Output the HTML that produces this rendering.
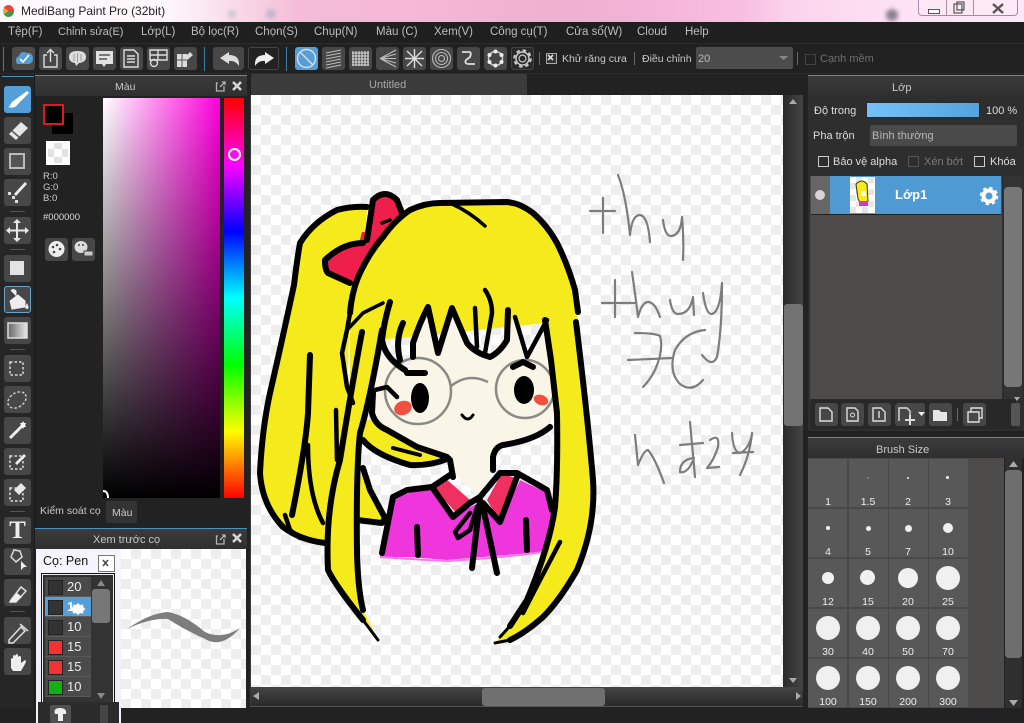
<!DOCTYPE html>
<html><head><meta charset="utf-8"><title>MediBang Paint Pro</title>
<style>
html,body{margin:0;padding:0;background:#222}
#r{position:relative;width:1024px;height:723px;overflow:hidden;background:#222;font-family:"Liberation Sans",sans-serif;font-size:11px;color:#ccc}
#r div,#r span.t{position:absolute}
.t{white-space:nowrap;line-height:14px}
.m{top:25px;font-size:11.5px;color:#bdbdbd}
.b{width:23px;height:23px;background:#474747;border-radius:3px}
.l{left:4px;width:27px;height:27px;background:#474747;border-radius:3px}
.s{left:10px;width:15px;height:1px;background:#555}
.h{background:linear-gradient(#3b3b3b,#2f2f2f);height:20px;border-top:1px solid #4e91bd}
.c{width:39px;height:48px;background:#585858}
.lb{width:40px;text-align:center;color:#eee;font-size:10.5px}
.d{background:#f0f0f0;border-radius:50%}
.ck{background:repeating-conic-gradient(#eeeeee 0 25%,#fff 0 50%) 0 0/20px 20px}
.li{left:45px;width:46px;height:19px;background:#4a4a4a;border-bottom:1px solid #5a5a5a}
.sw{left:3px;top:3px;width:13px;height:13px;border:1px solid #222}
.n{left:22px;top:3px;font-size:13px;color:#eee}
</style></head><body><div id="r">

<!-- title bar -->
<div style="left:0;top:0;width:1024px;height:22px;background:linear-gradient(90deg,#fdfafc 0,#fdf6fa 170px,#f8dbe9 235px,#f4bcd6 300px,#f6b7d6 420px,#eeb0cf 560px,#f3b3d6 640px,#f8bee0 740px,#fbd3ec 790px,#fde2f4 900px,#fce8f6 1024px)"></div>
<div style="left:886px;top:9px;width:12px;height:12px;border-radius:50%;background:#8d7f8c;filter:blur(2px)"></div>
<div style="left:228px;top:10px;width:8px;height:8px;border-radius:50%;background:#cfc4d0;filter:blur(2px)"></div>
<div style="left:266px;top:9px;width:10px;height:10px;border-radius:50%;background:#c9b4cc;filter:blur(2px)"></div>
<div style="left:3px;top:5px;width:11px;height:12px;border-radius:50%;background:conic-gradient(#e8443a 0 30%,#3a9a4a 0 65%,#f2a23a 0 85%,#e8443a 0)"></div>
<span class="t" style="left:21px;top:4px;font-size:12px;color:#222">MediBang Paint Pro (32bit)</span>
<div style="left:918px;top:-2px;width:100px;height:18px;border:1px solid #a08ca0;border-radius:0 0 4px 4px;box-sizing:border-box;background:rgba(255,235,248,.5)"></div>
<div style="left:946px;top:0;width:1px;height:16px;background:#a58fa5"></div>
<div style="left:973px;top:0;width:1px;height:16px;background:#a58fa5"></div>
<div style="left:928px;top:9px;width:10px;height:3px;border:1px solid #555;background:#fff"></div>

<!-- menu -->
<div style="left:0;top:22px;width:1024px;height:21px;background:#1f1f1f"></div>
<span class="t m" style="left:8px">Tệp(F)</span>
<span class="t m" style="left:58px;font-size:11px">Chỉnh sửa(E)</span>
<span class="t m" style="left:141px">Lớp(L)</span>
<span class="t m" style="left:191px">Bộ lọc(R)</span>
<span class="t m" style="left:255px">Chọn(S)</span>
<span class="t m" style="left:314px">Chụp(N)</span>
<span class="t m" style="left:376px">Màu (C)</span>
<span class="t m" style="left:434px">Xem(V)</span>
<span class="t m" style="left:490px">Công cụ(T)</span>
<span class="t m" style="left:566px">Cửa sổ(W)</span>
<span class="t m" style="left:637px">Cloud</span>
<span class="t m" style="left:685px">Help</span>

<!-- toolbar -->
<div style="left:0;top:43px;width:1024px;height:31px;background:#212121;border-top:1px solid #2c2c2c;border-bottom:1px solid #2c2c2c;box-sizing:border-box"></div>
<div style="left:3px;top:47px;width:1px;height:24px;background:#3f7ea8"></div>
<div style="left:204px;top:47px;width:1px;height:24px;background:#3f7ea8"></div>
<div style="left:286px;top:47px;width:1px;height:24px;background:#3f7ea8"></div>
<div class="b" style="left:12px;top:47px;background:#4d4a48"></div>
<div class="b" style="left:39px;top:47px"></div>
<div class="b" style="left:66px;top:47px"></div>
<div class="b" style="left:93px;top:47px"></div>
<div class="b" style="left:120px;top:47px"></div>
<div class="b" style="left:147px;top:47px"></div>
<div class="b" style="left:174px;top:47px"></div>
<div class="b" style="left:213px;top:47px;width:31px"></div>
<div class="b" style="left:248px;top:47px;width:31px;background:#222;box-shadow:inset 0 0 0 1px #444"></div>
<div class="b" style="left:295px;top:47px;background:#559fd8"></div>
<div class="b" style="left:322px;top:47px"></div>
<div class="b" style="left:349px;top:47px"></div>
<div class="b" style="left:376px;top:47px"></div>
<div class="b" style="left:403px;top:47px"></div>
<div class="b" style="left:430px;top:47px"></div>
<div class="b" style="left:457px;top:47px"></div>
<div class="b" style="left:484px;top:47px"></div>
<div class="b" style="left:511px;top:47px;background:#2a2a2a;box-shadow:inset 0 0 0 1px #444"></div>
<div style="left:539px;top:52px;width:1px;height:13px;background:#666"></div>
<div style="left:546px;top:53px;width:9px;height:9px;border:1px solid #aaa;background:#333"></div>
<span class="t" style="left:562px;top:52px;color:#c8c8c8;font-size:10.5px">Khử răng cưa</span>
<div style="left:634px;top:52px;width:1px;height:13px;background:#666"></div>
<span class="t" style="left:642px;top:52px;color:#c8c8c8;font-size:10.5px">Điều chỉnh</span>
<div style="left:696px;top:47px;width:97px;height:22px;background:#4c4c4c;border-radius:2px"></div>
<span class="t" style="left:698px;top:52px;color:#bbb">20</span>
<div style="left:797px;top:52px;width:1px;height:13px;background:#666"></div>
<div style="left:805px;top:54px;width:9px;height:9px;border:1px solid #444"></div>
<span class="t" style="left:820px;top:52px;color:#6f6f6f">Cạnh mềm</span>

<!-- left tools -->
<div style="left:0;top:76px;width:35px;height:632px;background:#262626;border-right:1px solid #1a1a1a;box-sizing:border-box"></div>
<div style="left:2px;top:76px;width:32px;height:1px;background:#4e91bd"></div>
<div class="l" style="top:86px;background:#559fd8"></div>
<div class="l" style="top:117px"></div><div class="l" style="top:148px"></div><div class="l" style="top:179px"></div>
<div class="s" style="top:211px"></div>
<div class="l" style="top:217px"></div>
<div class="s" style="top:249px"></div>
<div class="l" style="top:255px"></div>
<div class="l" style="top:286px;box-shadow:inset 0 0 0 1px #6aa3c8"></div>
<div class="l" style="top:317px"></div>
<div class="s" style="top:349px"></div>
<div class="l" style="top:355px"></div><div class="l" style="top:386px"></div><div class="l" style="top:417px"></div><div class="l" style="top:448px"></div><div class="l" style="top:479px"></div>
<div class="s" style="top:511px"></div>
<div class="l" style="top:517px"></div><div class="l" style="top:548px"></div><div class="l" style="top:579px"></div>
<div class="s" style="top:611px"></div>
<div class="l" style="top:617px"></div><div class="l" style="top:648px"></div>
<span class="t" style="left:6px;top:519px;width:23px;text-align:center;font:bold 25px/24px 'Liberation Serif',serif;color:#eee">T</span>

<!-- colour panel -->
<div style="left:35px;top:75px;width:212px;height:423px;background:#222"></div>
<div class="h" style="left:35px;top:75px;width:212px"></div>
<span class="t" style="left:115px;top:80px;color:#c8c8c8;font-size:10.5px">Màu</span>
<div style="left:52px;top:113px;width:21px;height:21px;background:#000"></div>
<div style="left:43px;top:104px;width:17px;height:17px;background:#000;border:2px solid #e01a1a"></div>
<div style="left:46px;top:141px;width:24px;height:24px;background:#fff"></div>
<svg style="position:absolute;left:46px;top:141px" width="24" height="24" viewBox="0 0 24 24"><path d="M2 8h6v8H2zM16 8h6v8h-6zM8 2h8v6H8zM8 16h8v6H8z" fill="#e2e2e2"/></svg>
<span class="t" style="left:43px;top:171px;font-size:9.5px;line-height:11px;color:#ccc;white-space:pre">R:0
G:0
B:0</span>
<span class="t" style="left:43px;top:211px;font-size:9.5px;color:#ddd">#000000</span>
<div class="b" style="left:45px;top:238px;height:23px"></div>
<div class="b" style="left:72px;top:238px;height:23px"></div>
<div style="left:103px;top:98px;width:117px;height:400px;background:linear-gradient(to top,#000,rgba(0,0,0,0)),linear-gradient(to right,#fff,#ff00dc)"></div>
<div style="left:224px;top:98px;width:20px;height:400px;background:linear-gradient(#f00 0,#f0f 16.67%,#00f 33.33%,#0ff 50%,#0f0 66.67%,#ff0 83.33%,#f00 100%)"></div>
<div style="left:228px;top:148px;width:9px;height:9px;border:2px solid #fff;border-radius:50%;background:#f010f0"></div>
<span class="t" style="left:40px;top:504px;color:#c8c8c8;font-size:10.5px">Kiểm soát cọ</span>
<div style="left:106px;top:501px;width:31px;height:22px;background:#333;border-radius:2px"></div>
<span class="t" style="left:112px;top:506px;color:#c8c8c8;font-size:10.5px">Màu</span>

<!-- brush preview -->
<div class="h" style="left:35px;top:528px;width:212px"></div>
<span class="t" style="left:93px;top:533px;color:#c8c8c8">Xem trước cọ</span>
<div class="ck" style="left:121px;top:549px;width:125px;height:159px"></div>
<div style="left:36px;top:549px;width:85px;height:174px;background:linear-gradient(#f6f5fd,#efeef8)"></div>
<span class="t" style="left:43px;top:554px;font-size:12.5px;color:#111">Cọ: Pen</span>
<div style="left:98px;top:555px;width:15px;height:15px;border:1px solid #777;background:#fff"></div>
<div style="left:41px;top:573px;width:72px;height:133px;background:#2e2e2e;border:1px solid #111;box-shadow:inset 0 0 0 1px #eee"></div>
<div style="left:45px;top:577px;width:67px;height:125px;background:#333"></div>
<div class="li" style="top:577px"><div class="sw" style="background:#333"></div><span class="t n">20</span></div>
<div class="li" style="top:597px;background:#559fd8"><div class="sw" style="background:#333"></div><span class="t n" style="font-weight:bold;color:#fff">1</span></div>
<div class="li" style="top:617px"><div class="sw" style="background:#333"></div><span class="t n">10</span></div>
<div class="li" style="top:637px"><div class="sw" style="background:#f23333"></div><span class="t n">15</span></div>
<div class="li" style="top:657px"><div class="sw" style="background:#f23333"></div><span class="t n">15</span></div>
<div class="li" style="top:677px"><div class="sw" style="background:#12b012"></div><span class="t n">10</span></div>
<div style="left:92px;top:589px;width:18px;height:34px;background:#777;border-radius:3px"></div>
<div style="left:36px;top:702px;width:85px;height:21px;background:#2b2b2b;border-left:2px solid #f3f2fb;border-right:2px solid #f3f2fb;box-sizing:border-box"></div>
<div style="left:50px;top:705px;width:21px;height:18px;background:#505050;border-radius:2px"></div>
<div style="left:100px;top:705px;width:8px;height:18px;background:#444"></div>

<!-- canvas panel -->
<div style="left:251px;top:74px;width:276px;height:21px;background:#3b3b3b;border-radius:2px 2px 0 0"></div>
<span class="t" style="left:369px;top:78px;color:#a8a8a8">Untitled</span>
<div class="ck" style="left:251px;top:95px;width:532px;height:592px"></div>
<div style="left:250px;top:95px;width:1px;height:611px;background:#3a3a3a"></div>
<div style="left:783px;top:95px;width:20px;height:592px;background:linear-gradient(90deg,#2a2a2a,#444)"></div>
<div style="left:784px;top:304px;width:19px;height:122px;background:#727272;border-radius:3px"></div>
<div style="left:251px;top:687px;width:552px;height:19px;background:linear-gradient(#444,#2a2a2a)"></div>
<div style="left:482px;top:688px;width:123px;height:18px;background:#707070;border-radius:3px"></div>
<div style="left:250px;top:706px;width:553px;height:1px;background:#555"></div>

<!-- drawing -->
<svg style="position:absolute;left:0;top:0" width="1024" height="723" viewBox="0 0 1024 723">
<defs><linearGradient id="g" x1="0" x2="1"><stop offset="0" stop-color="#666"/><stop offset="1" stop-color="#e8e8e8"/></linearGradient></defs>
<g stroke="none">
<path fill="#f5eb1c" d="M300 243L313 223L337 210L367 207L365 250L350 313L345 440L327 527L325 543L300 538L283 527L263 500L260 470L270 393L287 323L297 270Z"/>
<path fill="#ee1f4a" d="M367 240L373 200L385 193L397 200L402 213L377 240Z"/>
<path fill="#ee1f4a" d="M363 243L343 245L325 260L328 273L350 283L363 263Z"/>
<path fill="#ee1f4a" d="M362 232L388 232L362 282L348 285Z"/>
<path fill="#f5eb1c" d="M350 313L360 273L383 237L410 210L440 203L507 202L533 213L557 243L575 290L578 318L583 380L593 470L593 527L577 570L543 617L510 640L495 643L527 600L547 543L557 507L557 413L547 323L380 340L360 400L350 380Z"/>
<path fill="#f5eb1c" d="M350 420L365 440L383 457L410 465L450 460L410 443L373 420Z"/>
<path fill="#f9f6e8" d="M382 347L397 367L410 367L413 343L428 308L438 350L452 308L470 347L487 357L507 337L513 317L527 357L547 323L552 357L555 413L543 430L503 443L493 460L493 470L480 497L453 473L447 457L410 443L390 430L373 420L373 393L378 367Z"/>
<path fill="#f5eb1c" d="M363 468L370 490L385 518L382 523L350 520Z"/>
<path fill="#ef36dd" d="M380 557L393 497L433 487L453 517L483 500L500 523L520 480L547 493L552 510L543 552L483 557L447 560L410 557Z"/>
<path fill="#f03060" d="M433 487L445 478L470 500L458 515Z"/>
<path fill="#f03060" d="M487 500L502 473L515 478L500 522Z"/>
<path fill="#f5eb1c" d="M362 332L382 330L367 407L357 473L357 553L363 610L378 640L363 620L337 583L328 570L327 527L340 460Z"/>
<ellipse cx="403" cy="408" rx="9" ry="7" fill="#f0503f" transform="rotate(-20 403 408)"/>
<ellipse cx="541" cy="400" rx="7.5" ry="5" fill="#f0503f" transform="rotate(20 541 400)"/>
</g>
<path d="M380 557Q410 559 447 561Q500 558 543 552" fill="none" stroke="#f47ce8" stroke-width="2"/>
<g fill="none" stroke="#8a8a85" stroke-width="2.5">
<circle cx="418" cy="391" r="33"/>
<circle cx="525" cy="389" r="29"/>
<path d="M450 387Q467 372 488 382"/>
</g>
<ellipse cx="420" cy="398" rx="9" ry="15"/>
<ellipse cx="524" cy="390" rx="10" ry="14"/>
<g fill="none" stroke="#000" stroke-width="6" stroke-linecap="round" stroke-linejoin="round">
<path d="M300 243Q313 222 337 210Q352 206 367 207M300 243Q297 260 294 285Q280 350 270 393Q262 430 260 473Q262 505 283 527Q300 540 325 543"/>
<path d="M367 240L373 200Q385 188 397 200L402 213"/>
<path d="M363 243Q343 243 325 260Q325 270 328 273L350 283"/>
<path d="M350 313Q352 290 360 273Q370 252 383 237Q395 220 410 210Q425 203 440 203L507 202Q520 203 533 213Q547 225 557 243Q568 265 575 290L578 312"/>
<path d="M576 322Q588 420 593 480Q596 525 577 570Q560 600 543 617Q525 633 510 640"/>
<path d="M510 640L495 643" stroke-width="3"/>
<path d="M557 413Q558 470 555 507Q550 545 527 600L510 626"/>
<path d="M510 626L500 637" stroke-width="3"/>
<path d="M545 320L551 360L557 413"/>
<path d="M450 203Q470 212 485 226" stroke-width="3.5"/>
<path d="M382 223L390 220" stroke-width="3.5"/>
<path d="M390 302Q384 322 382 340Q385 358 405 370"/>
<path d="M403 323Q395 340 400 360"/>
<path d="M413 357L413 343Q420 322 428 307L438 353L452 308L467 343Q475 353 490 357Q500 352 507 340L508 310"/>
<path d="M475 308L477 347" stroke-width="4.5"/>
<path d="M485 290Q492 300 492 313L485 353" stroke-width="4.5"/>
<path d="M515 317L527 357L547 320" stroke-width="4.5"/>
<path d="M347 330L363 313L383 303" stroke-width="3.5"/>
<path d="M350 313L347 330L342 353L347 387L353 403" stroke-width="4.5"/>
<path d="M362 332Q352 385 340 460Q325 510 328 570Q335 585 363 620"/>
<path d="M363 620L378 640" stroke-width="3"/>
<path d="M382 330Q370 400 360 433Q356 470 357 553Q358 590 363 610"/>
<path d="M310 355L308 413Q306 445 292 515"/>
<path d="M336 410L337 460" stroke-width="4.5"/>
<path d="M308 445Q308 495 323 523" stroke-width="4.5"/>
<path d="M285 515L290 530L300 538" stroke-width="4.5"/>
<path d="M375 390L387 387L397 397" stroke-width="4.5"/>
<path d="M373 393L372 413Q375 425 387 430L417 447L447 457L450 460L453 477"/>
<path d="M363 440Q375 455 410 465Q430 466 447 459"/>
<path d="M393 448L420 455" stroke-width="4"/>
<path d="M407 373L425 373"/>
<path d="M513 367L523 362L533 367"/>
<path d="M493 470L493 457Q495 447 503 445Q535 440 550 427"/>
<path d="M393 497L407 490L432 487L450 475"/>
<path d="M432 487L453 517L470 503L480 497L500 473L517 473L547 490L552 510"/>
<path d="M517 477L500 522L483 503"/>
<path d="M393 497L382 553"/>
<path d="M480 500L472 568"/>
<path d="M483 507L497 573"/>
<path d="M470 513L455 532L458 538L470 530L477 507" stroke-width="4.5"/>
<path d="M417 527L418 555"/>
<path d="M526 520L527 550"/>
<path d="M363 468L370 490L385 518L382 523L357 520"/>
<path d="M560 542L540 580L523 613" stroke-width="4.5"/>
<path d="M462 415Q468 423 473 415" stroke-width="3"/>
</g>
<g fill="none" stroke="#7d7d7d" stroke-width="2.2" stroke-linecap="round" stroke-linejoin="round">
<path d="M603 198L603 233M590 211L615 211"/>
<path d="M618 175Q626 195 630 235Q632 215 640 215Q648 216 650 242"/>
<path d="M663 220Q665 237 672 236Q681 234 682 217Q684 240 683 260"/>
<path d="M615 280L615 317M602 303H635"/>
<path d="M632 272Q636 300 638 317Q642 302 648 302Q655 302 660 317"/>
<path d="M670 300Q672 314 678 314Q690 314 693 297L694 315"/>
<path d="M703 293Q706 315 712 314Q720 312 722 283Q722 330 717 357Q712 368 702 355"/>
<path d="M635 333Q655 333 660 336Q664 350 655 370Q650 380 643 387M628 360L672 358"/>
<path d="M705 330Q685 332 675 350Q668 372 680 384Q692 393 703 380"/>
<path d="M635 435Q637 455 638 465Q644 450 648 450Q655 458 664 483"/>
<path d="M690 422L695 477M680 445L703 443M693 458Q680 460 680 472Q688 474 694 458"/>
<path d="M710 440Q720 433 718 447Q714 460 707 468L719 467"/>
<path d="M732 433Q733 452 740 453Q748 450 752 435M752 433Q750 455 740 475M733 453L753 452"/>
</g>

<!-- colour marker -->
<path d="M103 491Q108 491 108 498" fill="none" stroke="#fff" stroke-width="2"/>
<!-- preview stroke -->
<path d="M127 629Q150 613 168 612Q185 615 205 632Q222 640 240 628Q222 649 205 639Q185 630 168 619Q150 618 127 629Z" fill="#7d7d7d"/>

<!-- window buttons -->
<g fill="none" stroke="#555" stroke-width="1.2">
<rect x="954" y="4" width="8" height="9"/><rect x="957" y="2" width="7" height="8"/>
<path d="M993 4L1003 13M1003 4L993 13" stroke-width="2.4"/>
</g>
<!-- header icons -->
<g fill="none" stroke="#b5b5b5" stroke-width="1.3">
<path d="M218 83H216.500V91H224V86M220 87L225 82M222 82H225V85"/>
<path d="M218 536H216.500V544H224V539M220 540L225 535M222 535H225V538"/>
<path d="M995 83H993.500V91H1001V86M997 87L1002 82M999 82H1002V85"/>
<path d="M995 445H993.500V453H1001V448M997 449L1002 444M999 444H1002V447"/>
</g>
<g stroke="#d5d5d5" stroke-width="2.6">
<path d="M233 82L241 90M241 82L233 90"/>
<path d="M233 534L241 542M241 534L233 542"/>
<path d="M1011 82L1019 90M1019 82L1011 90"/>
<path d="M1011 444L1019 452M1019 444L1011 452"/>
</g>
<!-- toolbar icons -->
<path d="M17 64Q14 58 19 56Q21 50 27 53Q32 52 33 58Q33 64 28 64Z" fill="#559fd8"/>
<path d="M20 59L23 62L29 55" fill="none" stroke="#fff" stroke-width="1.6"/>
<g fill="none" stroke="#ddd" stroke-width="1.4">
<path d="M47 55H44V67H57V55H54M50.500 62V50M47 53L50.500 49.500L54 53"/>
<path d="M124 50H134L138 54V67H124ZM127 56H135M127 59H135M127 62H135"/>
<path d="M150 50H167V60H150ZM150 55H167M158 50V60"/>
<circle cx="154" cy="63" r="3.500"/>
<path d="M300 52L313 65"/><circle cx="306.500" cy="58.500" r="9"/>
</g>
<path d="M69 57Q69 51 77.500 51Q86 51 86 57Q86 62 79 63L76 66L75 63Q69 62 69 57Z" fill="#ddd"/>
<path d="M74 54V61M77.500 53V62M81 54V61" stroke="#888" stroke-width=".8"/>
<path d="M96 51H113V64H106L104 67L102 64H96Z" fill="#e2e2e2"/>
<path d="M99 55H110M99 59H107" stroke="#555" stroke-width="1.5"/>
<path d="M177 54H187V67H177ZM190 52L193 55L186 61L184 58Z" fill="#ddd"/>
<path d="M177 60H187M182 54V67" stroke="#555"/>
<path d="M220 58L229 52V55Q240 55 239 66Q235 60 229 61V64Z" fill="#ddd"/>
<path d="M274 58L265 52V55Q254 55 255 66Q259 60 265 61V64Z" fill="#eee"/>
<g fill="none" stroke="#bbb" stroke-width="1.1">
<path d="M326 53L341 50M326 56L341 53M326 59L341 56M326 62L341 59M326 65L341 62M326 68L341 65"/>
<path d="M353 51V66M356 51V66M359 51V66M362 51V66M365 51V66M368 51V66M352 53H369M352 56H369M352 59H369M352 62H369M352 65H369" stroke="#ddd"/>
<path d="M380 58.500L396 50M380 58.500L396 54M380 58.500L396 58.500M380 58.500L396 63M380 58.500L396 67"/>
<path d="M407 51L422 66M422 51L407 66M414.500 49V68M405 58.500H424" stroke="#ddd" stroke-width="1.4"/>
<circle cx="441.500" cy="58.500" r="9"/><circle cx="441.500" cy="58.500" r="6"/><circle cx="441.500" cy="58.500" r="3"/>
<path d="M462 52H469Q472 52 470 57L466 60Q464 64 469 64H475" stroke="#ddd" stroke-width="1.8"/>
<circle cx="495.500" cy="58.500" r="7" stroke="#ccc" stroke-width="1.500"/>
<circle cx="495.500" cy="51.500" r="2" fill="#eee" stroke="none"/><circle cx="495.500" cy="65.500" r="2" fill="#eee" stroke="none"/><circle cx="489.500" cy="55" r="2" fill="#eee" stroke="none"/><circle cx="501.500" cy="55" r="2" fill="#eee" stroke="none"/><circle cx="489.500" cy="62" r="2" fill="#eee" stroke="none"/><circle cx="501.500" cy="62" r="2" fill="#eee" stroke="none"/>
<circle cx="522.500" cy="58.500" r="6.500" stroke="#ccc" stroke-width="1.500"/><circle cx="522.500" cy="58.500" r="3.500" stroke="#ccc" stroke-width="1.200"/>
<circle cx="522.500" cy="58.500" r="8.300" stroke="#ccc" stroke-width="2" stroke-dasharray="3.500 3"/>
</g>
<path d="M548 55L553 60M553 55L548 60" stroke="#ddd" stroke-width="1.6"/>
<path d="M782 56H791L786.500 60Z" fill="#888" transform="translate(-3 0)"/>
<!-- tool icons -->
<path d="M27 91L12 102Q8 109 8 107Q15 109 18 104L29 93Z" fill="#fff"/>
<path d="M21 122L28 128L16 140L9 134Z" fill="#e6e6e6"/><path d="M12 131L19 137" stroke="#555" stroke-width="1.500"/>
<rect x="10" y="154" width="14" height="14" fill="#555" stroke="#bbb" stroke-width="2"/>
<path d="M27 184L16 196L14 194L25 182Z" fill="#eee"/>
<path d="M8 192h3v3h-3zM12 196h3v3h-3zM15 200h3v3h-3z" fill="#ddd"/>
<path d="M17 222V239M9 230.500H26" stroke="#e8e8e8" stroke-width="2"/>
<path d="M17 219L13 223H21ZM17 242L13 238H21ZM6 230.500L10 227V234ZM29 230.500L25 227V234Z" fill="#e8e8e8"/>
<rect x="10" y="261" width="14" height="14" fill="#e4e4e4"/>
<path d="M10 301L18 295L25 301L25 307L12 309ZM11 291Q13 288 16 291L16 296" fill="#eee" stroke="#eee"/>
<path d="M27 303Q24 309 27 309Q30 309 27 303" fill="#eee"/>
<rect x="8" y="323" width="19" height="15" fill="url(#g)" stroke="#ddd" stroke-width="1.500"/>
<rect x="10" y="362" width="13" height="13" fill="none" stroke="#ddd" stroke-width="1.500" stroke-dasharray="2.500 2"/>
<ellipse cx="17" cy="400" rx="10" ry="7" transform="rotate(-35 17 400)" fill="none" stroke="#ccc" stroke-width="1.500" stroke-dasharray="2.500 2"/>
<path d="M10 438L23 425" stroke="#eee" stroke-width="3"/><path d="M23 421l1 2 2 0-1 2 1 2-2 0-1 2-1-2-2 0 1-2-1-2 2 0z" fill="#fff"/>
<rect x="10" y="456" width="13" height="13" fill="none" stroke="#ddd" stroke-width="1.500" stroke-dasharray="2.500 2"/><path d="M15 463L24 454L26 456L17 465Z" fill="#eee"/>
<rect x="10" y="488" width="13" height="13" fill="none" stroke="#ddd" stroke-width="1.500" stroke-dasharray="2.500 2"/><path d="M14 490L21 483L26 488L19 495Z" fill="#e8e8e8"/>
<g fill="none" stroke="#ddd" stroke-width="1.500">
<path d="M11 557L14 550L20 551L22 557L16 562Z"/>
<path d="M11 600L21 587L26 591L16 602H10Z"/>
<path d="M9 640L21 627L25 631L13 643H9ZM20 624L28 631"/>
</g>
<path d="M21 561L21 570L24 567L27 567Z" fill="#eee"/>
<path d="M11 600L17 593L22 597L16 602H10Z" fill="#eee"/>
<path d="M11 668V659Q12 657 13 659V656Q14 654 15.500 656V655Q17 653 18 655V657Q20 655 21 657V663L25 660Q27 661 25 664L21 671H13Z" fill="#eee"/>
<!-- palette icons -->
<ellipse cx="56.500" cy="249" rx="8" ry="8" fill="#eee"/><circle cx="53" cy="247" r="1.300" fill="#444"/><circle cx="57" cy="245" r="1.300" fill="#444"/><circle cx="60" cy="249" r="1.300" fill="#444"/><circle cx="54" cy="252" r="1.300" fill="#444"/>
<ellipse cx="81" cy="247" rx="6.500" ry="6" fill="#ddd"/><rect x="84" y="251" width="9" height="5" fill="#ccc" stroke="#444"/><circle cx="79" cy="245" r="1" fill="#444"/><circle cx="83" cy="245" r="1" fill="#444"/>
<!-- brush list scrollbar arrows, tools -->
<path d="M101 580L97 586H105ZM101 699L97 693H105Z" fill="#888"/>
<path d="M103 560L108 566M108 560L103 566" stroke="#444" stroke-width="1.500"/>
<path d="M78 603l2 2 3-.5 .5 3 2 1.500-2 1.500-.5 3-3-.5-2 2-2-2-3 .5-.5-3-2-1.500 2-1.500 .5-3 3 .5z" fill="#fff"/>
<path d="M55 714Q53 708 60 708Q67 708 66 714ZM58 714H63V721H58Z" fill="#eee"/>
<!-- scroll arrows -->
<path d="M793 99L789 104H797ZM793 683L789 678H797ZM253 696L259 692V700ZM801 696L796 692V700Z" fill="#aaa"/>
</svg>

<!-- layer panel -->
<div style="left:808px;top:75px;width:216px;height:356px;background:#2e2e2e"></div>
<div class="h" style="left:808px;top:75px;width:216px"></div>
<span class="t" style="left:892px;top:81px;color:#c8c8c8">Lớp</span>
<span class="t" style="left:814px;top:104px;color:#ddd">Độ trong</span>
<div style="left:866px;top:102px;width:114px;height:16px;background:linear-gradient(90deg,#76c2f7,#55a3dc);border:1px solid #2a2a2a;box-sizing:border-box"></div>
<span class="t" style="left:986px;top:104px;color:#ddd">100 %</span>
<span class="t" style="left:813px;top:129px;color:#ddd">Pha trộn</span>
<div style="left:870px;top:125px;width:147px;height:21px;background:#4a4a4a;border-radius:2px"></div>
<span class="t" style="left:872px;top:129px;color:#b8b8b8">Bình thường</span>
<div style="left:818px;top:156px;width:9px;height:9px;border:1px solid #ccc"></div>
<span class="t" style="left:833px;top:155px;color:#ddd">Bảo vệ alpha</span>
<div style="left:908px;top:156px;width:9px;height:9px;border:1px solid #555"></div>
<span class="t" style="left:924px;top:155px;color:#7c7c7c">Xén bớt</span>
<div style="left:974px;top:156px;width:9px;height:9px;border:1px solid #ccc"></div>
<span class="t" style="left:990px;top:155px;color:#ddd">Khóa</span>
<div style="left:810px;top:176px;width:192px;height:223px;background:#4c4b49"></div>
<div style="left:811px;top:176px;width:19px;height:38px;background:#666"></div>
<div style="left:830px;top:176px;width:171px;height:38px;background:#4f9ad2"></div>
<div style="left:811px;top:214px;width:190px;height:1px;background:#222"></div>
<div style="left:815px;top:190px;width:10px;height:10px;border-radius:50%;background:#d5d5d5"></div>
<div style="left:850px;top:177px;width:25px;height:36px;background:#fff"></div>
<svg style="position:absolute;left:850px;top:177px" width="25" height="36" viewBox="0 0 25 36">
<path d="M0 6h6v6H0zM12 6h6v6h-6zM6 12h6v6H6zM18 12h6v6h-6zM0 18h6v6H0zM12 18h6v6h-6zM6 24h6v6H6zM18 24h6v6h-6zM0 30h6v6H0zM12 30h6v6h-6zM6 0h6v6H6zM18 0h6v6h-6z" fill="#e6e6e6"/>
<path d="M6 7Q12 1 17 7L18 24L11 27L8 22Z" fill="#f5eb1c" stroke="#333" stroke-width="1"/><path d="M11 14H16V19H11Z" fill="#f9f6e8"/><path d="M9 24H18V29H9Z" fill="#d838c8"/>
</svg>
<span class="t" style="left:895px;top:188px;color:#fff;font-size:13px;font-weight:bold">Lớp1</span>
<svg style="position:absolute;left:979px;top:186px" width="20" height="20" viewBox="0 0 20 20">
<circle cx="10" cy="10" r="5.500" fill="none" stroke="#fff" stroke-width="4"/><circle cx="10" cy="10" r="7.500" fill="none" stroke="#fff" stroke-width="3.500" stroke-dasharray="3 2.900"/>
</svg>
<div style="left:1004px;top:176px;width:18px;height:223px;background:#333"></div>
<div style="left:1004px;top:187px;width:18px;height:200px;background:#777;border-radius:4px"></div>
<div style="left:811px;top:399px;width:205px;height:30px;background:#282828"></div>
<div class="b" style="left:815px;top:403px"></div>
<div class="b" style="left:841px;top:403px"></div>
<div class="b" style="left:868px;top:403px"></div>
<div class="b" style="left:895px;top:403px;width:30px"></div>
<div class="b" style="left:929px;top:403px"></div>
<div style="left:957px;top:408px;width:1px;height:13px;background:#666"></div>
<div class="b" style="left:963px;top:403px"></div>
<div style="left:1011px;top:403px;width:9px;height:23px;background:#555;border-radius:2px"></div>
<svg style="position:absolute;left:808px;top:395px" width="216" height="40" viewBox="808 395 216 40">
<path d="M1020 397h-6l3 4z" fill="#aaa"/>
<g fill="none" stroke="#ddd" stroke-width="1.400">
<path d="M820 408H828L832 412V421H820Z"/>
<path d="M847 408H855L858 411V421H847Z"/>
<path d="M873 408H881L885 412V421H873Z"/>
<path d="M899 421V408H907L910 411V416"/>
<path d="M968 412H979V422H968ZM971 412V408H982V418H979"/>
</g>
<path d="M905 420H915M910 415V425" stroke="#ddd" stroke-width="2"/>
<path d="M918 412H925L921.500 416Z" fill="#eee"/>
<path d="M933 410H939L941 412H947V421H933Z" fill="#e6e6e6"/>
<circle cx="852.500" cy="415" r="2" fill="none" stroke="#ddd"/>
<path d="M879 411V418" stroke="#ddd" stroke-width="1.400"/>
</svg>

<!-- brush size panel -->
<div class="h" style="left:808px;top:437px;width:216px"></div>
<span class="t" style="left:876px;top:443px;color:#c8c8c8">Brush Size</span>
<div style="left:808px;top:458px;width:196px;height:250px;background:#4b4947"></div>
<div style="left:968px;top:458px;width:36px;height:250px;background:#4e4c4a"></div>
<div style="left:1005px;top:458px;width:17px;height:250px;background:#2f2f2f"></div>
<div style="left:1005px;top:470px;width:17px;height:188px;background:#6e6e6e;border-radius:4px"></div>
<svg style="position:absolute;left:1005px;top:458px" width="17" height="250" viewBox="0 0 17 250"><path d="M8.500 3L4 9H13ZM8.500 248L4 242H13Z" fill="#aaa"/></svg>

<div class="c" style="left:808px;top:459px"></div><div class="c" style="left:849px;top:459px"></div><div class="c" style="left:889px;top:459px"></div><div class="c" style="left:929px;top:459px"></div>
<div class="c" style="left:808px;top:509px"></div><div class="c" style="left:849px;top:509px"></div><div class="c" style="left:889px;top:509px"></div><div class="c" style="left:929px;top:509px"></div>
<div class="c" style="left:808px;top:559px"></div><div class="c" style="left:849px;top:559px"></div><div class="c" style="left:889px;top:559px"></div><div class="c" style="left:929px;top:559px"></div>
<div class="c" style="left:808px;top:609px"></div><div class="c" style="left:849px;top:609px"></div><div class="c" style="left:889px;top:609px"></div><div class="c" style="left:929px;top:609px"></div>
<div class="c" style="left:808px;top:659px"></div><div class="c" style="left:849px;top:659px"></div><div class="c" style="left:889px;top:659px"></div><div class="c" style="left:929px;top:659px"></div>

<div class="d" style="left:867px;top:477px;width:2px;height:2px;background:#888"></div>
<div class="d" style="left:907px;top:477px;width:2px;height:2px"></div>
<div class="d" style="left:946px;top:476px;width:3px;height:3px"></div>
<div class="d" style="left:826px;top:526px;width:4px;height:4px"></div>
<div class="d" style="left:866px;top:526px;width:5px;height:5px"></div>
<div class="d" style="left:905px;top:525px;width:7px;height:7px"></div>
<div class="d" style="left:943px;top:523px;width:10px;height:10px"></div>
<div class="d" style="left:822px;top:572px;width:12px;height:12px"></div>
<div class="d" style="left:860px;top:570px;width:15px;height:15px"></div>
<div class="d" style="left:898px;top:568px;width:20px;height:20px"></div>
<div class="d" style="left:936px;top:566px;width:24px;height:24px"></div>
<div class="d" style="left:816px;top:616px;width:24px;height:24px"></div><div class="d" style="left:856px;top:616px;width:24px;height:24px"></div><div class="d" style="left:896px;top:616px;width:24px;height:24px"></div><div class="d" style="left:936px;top:616px;width:24px;height:24px"></div>
<div class="d" style="left:816px;top:666px;width:24px;height:24px"></div><div class="d" style="left:856px;top:666px;width:24px;height:24px"></div><div class="d" style="left:896px;top:666px;width:24px;height:24px"></div><div class="d" style="left:936px;top:666px;width:24px;height:24px"></div>

<span class="t lb" style="left:808px;top:495px">1</span><span class="t lb" style="left:848px;top:495px">1.5</span><span class="t lb" style="left:888px;top:495px">2</span><span class="t lb" style="left:928px;top:495px">3</span>
<span class="t lb" style="left:808px;top:545px">4</span><span class="t lb" style="left:848px;top:545px">5</span><span class="t lb" style="left:888px;top:545px">7</span><span class="t lb" style="left:928px;top:545px">10</span>
<span class="t lb" style="left:808px;top:595px">12</span><span class="t lb" style="left:848px;top:595px">15</span><span class="t lb" style="left:888px;top:595px">20</span><span class="t lb" style="left:928px;top:595px">25</span>
<span class="t lb" style="left:808px;top:645px">30</span><span class="t lb" style="left:848px;top:645px">40</span><span class="t lb" style="left:888px;top:645px">50</span><span class="t lb" style="left:928px;top:645px">70</span>
<span class="t lb" style="left:808px;top:695px">100</span><span class="t lb" style="left:848px;top:695px">150</span><span class="t lb" style="left:888px;top:695px">200</span><span class="t lb" style="left:928px;top:695px">300</span>
</div></body></html>
